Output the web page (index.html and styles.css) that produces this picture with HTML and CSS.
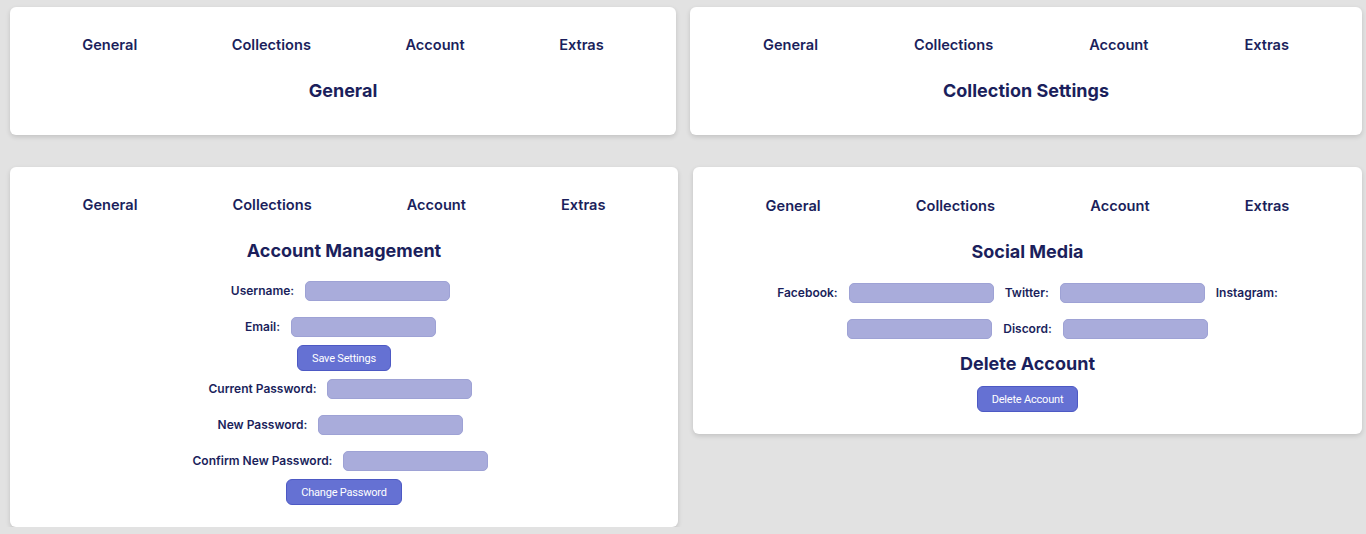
FILE: index.html
```html
<!DOCTYPE html>
<html lang="en">
<head>
<meta charset="utf-8">
<title>Settings</title>
<link rel="stylesheet" href="styles.css">
</head>
<body>
<main class="page">
  <div class="row row-top">
    <section class="card">
      <nav class="tabs">
        <a class="tab">General</a>
        <a class="tab">Collections</a>
        <a class="tab">Account</a>
        <a class="tab">Extras</a>
      </nav>
      <h2 class="title">General</h2>
    </section>
    <section class="card">
      <nav class="tabs">
        <a class="tab">General</a>
        <a class="tab">Collections</a>
        <a class="tab">Account</a>
        <a class="tab">Extras</a>
      </nav>
      <h2 class="title">Collection Settings</h2>
    </section>
  </div>
  <div class="row row-bottom">
    <section class="card card-form">
      <nav class="tabs">
        <a class="tab">General</a>
        <a class="tab">Collections</a>
        <a class="tab">Account</a>
        <a class="tab">Extras</a>
      </nav>
      <h2 class="title">Account Management</h2>
      <form class="stack">
        <div class="field"><label>Username:</label><span class="input"></span></div>
        <div class="field"><label>Email:</label><span class="input"></span></div>
        <button type="button" class="btn">Save Settings</button>
        <div class="field"><label>Current Password:</label><span class="input"></span></div>
        <div class="field"><label>New Password:</label><span class="input"></span></div>
        <div class="field"><label>Confirm New Password:</label><span class="input"></span></div>
        <button type="button" class="btn btn-last">Change Password</button>
      </form>
    </section>
    <section class="card card-form card-social">
      <nav class="tabs">
        <a class="tab">General</a>
        <a class="tab">Collections</a>
        <a class="tab">Account</a>
        <a class="tab">Extras</a>
      </nav>
      <h2 class="title">Social Media</h2>
      <div class="social">
        <label>Facebook:</label><span class="input"></span>
        <label>Twitter:</label><span class="input"></span>
        <label>Instagram:</label><span class="input"></span>
        <label>Discord:</label><span class="input"></span>
      </div>
      <h2 class="title title-delete">Delete Account</h2>
      <button type="button" class="btn">Delete Account</button>
    </section>
  </div>
</main>
</body>
</html>
```

FILE: styles.css
```css
* { box-sizing: border-box; }

html, body {
  margin: 0;
  background: #e2e2e2;
  font-family: "Inter", "Noto Sans", sans-serif;
  color: #1b1f5c;
}

.page {
  padding: 7px 4px 0 10px;
}

.row {
  display: grid;
  align-items: start;
}

.row-top {
  grid-template-columns: 666px 672px;
  column-gap: 14px;
  margin-bottom: 32px;
}

.row-bottom {
  grid-template-columns: 668px 669px;
  column-gap: 15px;
}

.card {
  background: #ffffff;
  border-radius: 6px;
  box-shadow: 0 2px 5px rgba(0, 0, 0, 0.14);
  padding: 29px 0 33px;
  display: flex;
  flex-direction: column;
  align-items: center;
}

.card-form {
  padding-bottom: 22px;
}

.card-social {
  padding-top: 30px;
}

.tabs {
  align-self: stretch;
  display: flex;
  justify-content: space-around;
  padding: 0 25px;
  height: 18px;
}

.tab {
  font-size: 14.6px;
  line-height: 18px;
  font-weight: 600;
  color: #1b1f5c;
}

.title {
  margin: 26px 0 0;
  font-size: 18px;
  line-height: 22px;
  font-weight: 700;
  color: #1b1f5c;
}

.stack {
  margin: 19px 0 0;
  display: flex;
  flex-direction: column;
  align-items: center;
}

.field {
  display: flex;
  align-items: center;
  gap: 11px;
  padding-right: 7px;
  margin-bottom: 16px;
}

.field + .btn {
  margin-top: -8px;
  margin-bottom: 8px;
}

.field + .btn-last {
  margin-bottom: 0;
}

label {
  font-size: 12px;
  line-height: 20px;
  font-weight: 600;
  color: #1b1f5c;
}

.input {
  display: block;
  width: 145px;
  height: 20px;
  border-radius: 5px;
  background: #a9acdb;
  border: 1px solid #9ea2d5;
}

.btn {
  font-family: "Roboto", "Liberation Sans", sans-serif;
  font-size: 11px;
  letter-spacing: -0.2px;
  color: #ffffff;
  background: #6571d3;
  border: 1px solid #4d59c4;
  border-radius: 6px;
  height: 26px;
  padding: 0 14px;
}

.social {
  margin-top: 20px;
  max-width: 560px;
  display: flex;
  flex-wrap: wrap;
  justify-content: center;
  align-items: center;
  column-gap: 11px;
  row-gap: 16px;
}

.title-delete {
  margin-top: 14px;
}

.card-social .btn {
  margin-top: 11px;
}
```
